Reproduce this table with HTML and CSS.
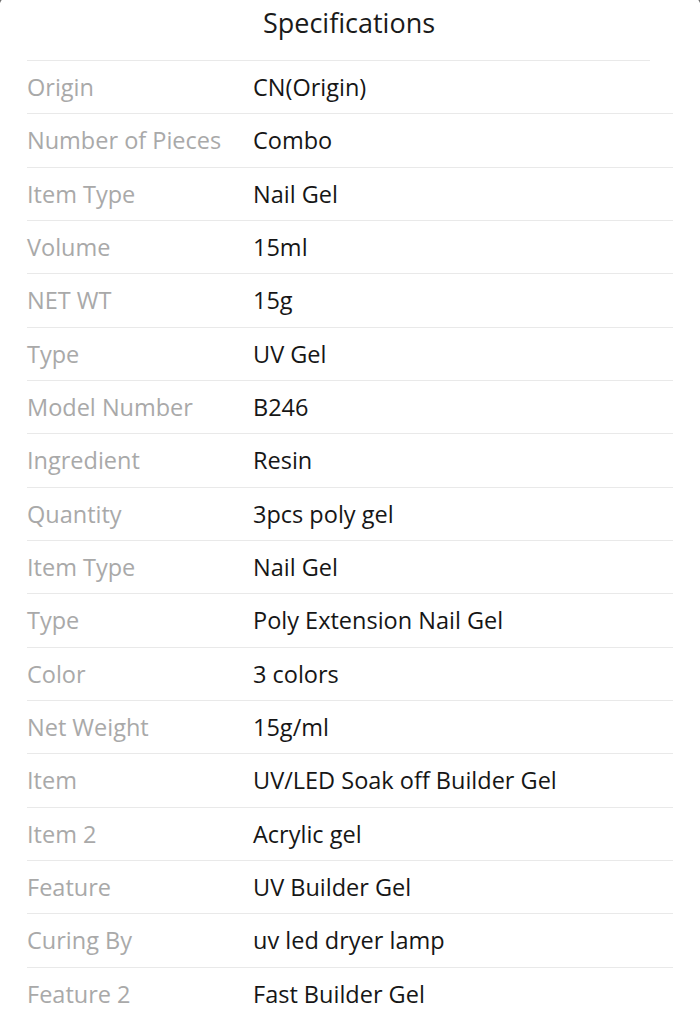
FILE: index.html
```html
<!DOCTYPE html>
<html>
<head>
<meta charset="utf-8">
<link rel="stylesheet" href="styles.css">
</head>
<body>
<div class="sheet">
  <div class="title">Specifications</div>
  <div class="rows">
    <div class="row"><span class="k">Origin</span><span class="v">CN(Origin)</span></div>
    <div class="row"><span class="k">Number of Pieces</span><span class="v">Combo</span></div>
    <div class="row"><span class="k">Item Type</span><span class="v">Nail Gel</span></div>
    <div class="row"><span class="k">Volume</span><span class="v">15ml</span></div>
    <div class="row"><span class="k">NET WT</span><span class="v">15g</span></div>
    <div class="row"><span class="k">Type</span><span class="v">UV Gel</span></div>
    <div class="row"><span class="k">Model Number</span><span class="v">B246</span></div>
    <div class="row"><span class="k">Ingredient</span><span class="v">Resin</span></div>
    <div class="row"><span class="k">Quantity</span><span class="v">3pcs poly gel</span></div>
    <div class="row"><span class="k">Item Type</span><span class="v">Nail Gel</span></div>
    <div class="row"><span class="k">Type</span><span class="v">Poly Extension Nail Gel</span></div>
    <div class="row"><span class="k">Color</span><span class="v">3 colors</span></div>
    <div class="row"><span class="k">Net Weight</span><span class="v">15g/ml</span></div>
    <div class="row"><span class="k">Item</span><span class="v">UV/LED Soak off Builder Gel</span></div>
    <div class="row"><span class="k">Item 2</span><span class="v">Acrylic gel</span></div>
    <div class="row"><span class="k">Feature</span><span class="v">UV Builder Gel</span></div>
    <div class="row"><span class="k">Curing By</span><span class="v">uv led dryer lamp</span></div>
    <div class="row"><span class="k">Feature 2</span><span class="v">Fast Builder Gel</span></div>
  </div>
</div>
</body>
</html>
```
FILE: styles.css
```css
html, body {
  margin: 0;
  padding: 0;
  background: #6e6e6e;
  overflow: hidden;
  height: 1018px;
}
body {
  font-family: "Open Sans", "Liberation Sans", sans-serif;
}
.sheet {
  background: #fff;
  margin: -14px -3px 0 -3px;
  padding-top: 14px;
  border-radius: 30px 30px 0 0;
  height: 1100px;
}
.title {
  margin: 0 53px 0 30px;
  border-bottom: 1px solid #e9e9e9;
  display: flex;
  align-items: center;
  justify-content: center;
  font-size: 27px;
  color: #1a1a1a;
  padding-left: 21px;
  box-sizing: border-box;
  padding-bottom: 16px;
  height: 61px;
}
.rows {
  margin: 0 30px 0 30px;
}
.row {
  height: 53.33px;
  box-sizing: border-box;
  border-bottom: 1px solid #e9e9e9;
  display: flex;
  align-items: center;
  font-size: 23.5px;
}
.k {
  width: 226px;
  flex: none;
  color: #a9a9a9;
}
.v {
  color: #161616;
}
```
